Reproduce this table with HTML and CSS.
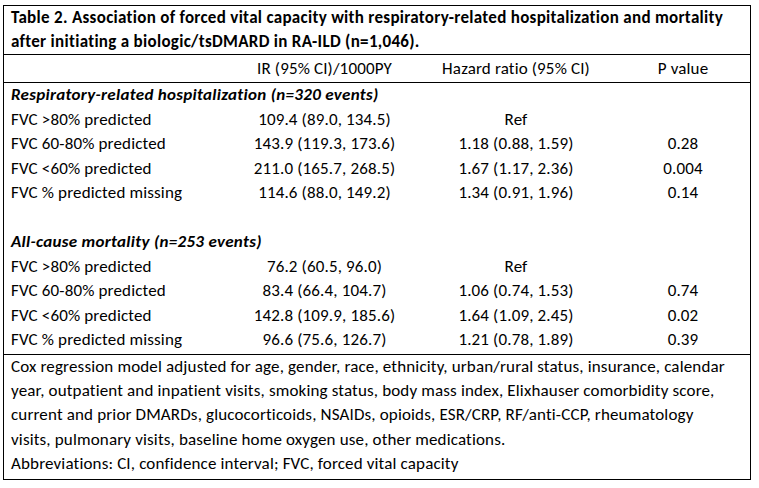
FILE: index.html
```html
<!DOCTYPE html>
<html lang="en">
<head>
<meta charset="utf-8">
<title>Table 2</title>
<link rel="stylesheet" href="styles.css">
</head>
<body>
<div class="tbl">
  <div class="caption">Table 2. Association of forced vital capacity with respiratory-related hospitalization and mortality after initiating a biologic/tsDMARD in RA-ILD (n=1,046).</div>
  <div class="head grid">
    <div></div>
    <div class="c">IR (95% CI)/1000PY</div>
    <div class="c">Hazard ratio (95% CI)</div>
    <div class="c">P value</div>
  </div>
  <div class="body">
    <div class="section">Respiratory-related hospitalization (n=320 events)</div>
    <div class="grid row"><div>FVC &gt;80% predicted</div><div class="c">109.4 (89.0, 134.5)</div><div class="c">Ref</div><div class="c"></div></div>
    <div class="grid row"><div>FVC 60-80% predicted</div><div class="c">143.9 (119.3, 173.6)</div><div class="c">1.18 (0.88, 1.59)</div><div class="c">0.28</div></div>
    <div class="grid row"><div>FVC &lt;60% predicted</div><div class="c">211.0 (165.7, 268.5)</div><div class="c">1.67 (1.17, 2.36)</div><div class="c">0.004</div></div>
    <div class="grid row"><div>FVC % predicted missing</div><div class="c">114.6 (88.0, 149.2)</div><div class="c">1.34 (0.91, 1.96)</div><div class="c">0.14</div></div>
    <div class="blank"></div>
    <div class="section">All-cause mortality (n=253 events)</div>
    <div class="grid row"><div>FVC &gt;80% predicted</div><div class="c">76.2 (60.5, 96.0)</div><div class="c">Ref</div><div class="c"></div></div>
    <div class="grid row"><div>FVC 60-80% predicted</div><div class="c">83.4 (66.4, 104.7)</div><div class="c">1.06 (0.74, 1.53)</div><div class="c">0.74</div></div>
    <div class="grid row"><div>FVC &lt;60% predicted</div><div class="c">142.8 (109.9, 185.6)</div><div class="c">1.64 (1.09, 2.45)</div><div class="c">0.02</div></div>
    <div class="grid row"><div>FVC % predicted missing</div><div class="c">96.6 (75.6, 126.7)</div><div class="c">1.21 (0.78, 1.89)</div><div class="c">0.39</div></div>
  </div>
  <div class="foot">
    <p>Cox regression model adjusted for age, gender, race, ethnicity, urban/rural status, insurance, calendar year, outpatient and inpatient visits, smoking status, body mass index, Elixhauser comorbidity score, current and prior DMARDs, glucocorticoids, NSAIDs, opioids, ESR/CRP, RF/anti-CCP, rheumatology visits, pulmonary visits, baseline home oxygen use, other medications.</p>
    <p>Abbreviations: CI, confidence interval; FVC, forced vital capacity</p>
  </div>
</div>
</body>
</html>
```
FILE: styles.css
```css
html, body {
  margin: 0;
  padding: 0;
  background: #fff;
}
body {
  padding: 5px 8px 0 3px;
  font-family: "Carlito", "Lato", "Liberation Sans", sans-serif;
  font-size: 17px;
  letter-spacing: 0.15px;
  color: #000;
}
.tbl {
  width: 746px;
  border: 1px solid #000;
}
.caption {
  font-weight: bold;
  letter-spacing: 0.3px;
  line-height: 24px;
  padding: 0 4px 0 7px;
  border-bottom: 1px solid #000;
}
.grid {
  display: grid;
  grid-template-columns: 229px 183px 200px 1fr;
}
.grid > div:first-child {
  padding-left: 7px;
}
.c {
  text-align: center;
}
.head {
  line-height: 24px;
  padding: 2px 0 1px;
  border-bottom: 1px solid #000;
}
.body {
  line-height: 24.5px;
  padding-bottom: 1px;
  border-bottom: 1px solid #000;
}
.section {
  font-weight: bold;
  font-style: italic;
  letter-spacing: 0.3px;
  padding-left: 7px;
}
.blank {
  height: 24.5px;
}
.foot {
  line-height: 24.4px;
  padding: 0 18px 2px 7px;
}
.foot p {
  margin: 0;
}
```
